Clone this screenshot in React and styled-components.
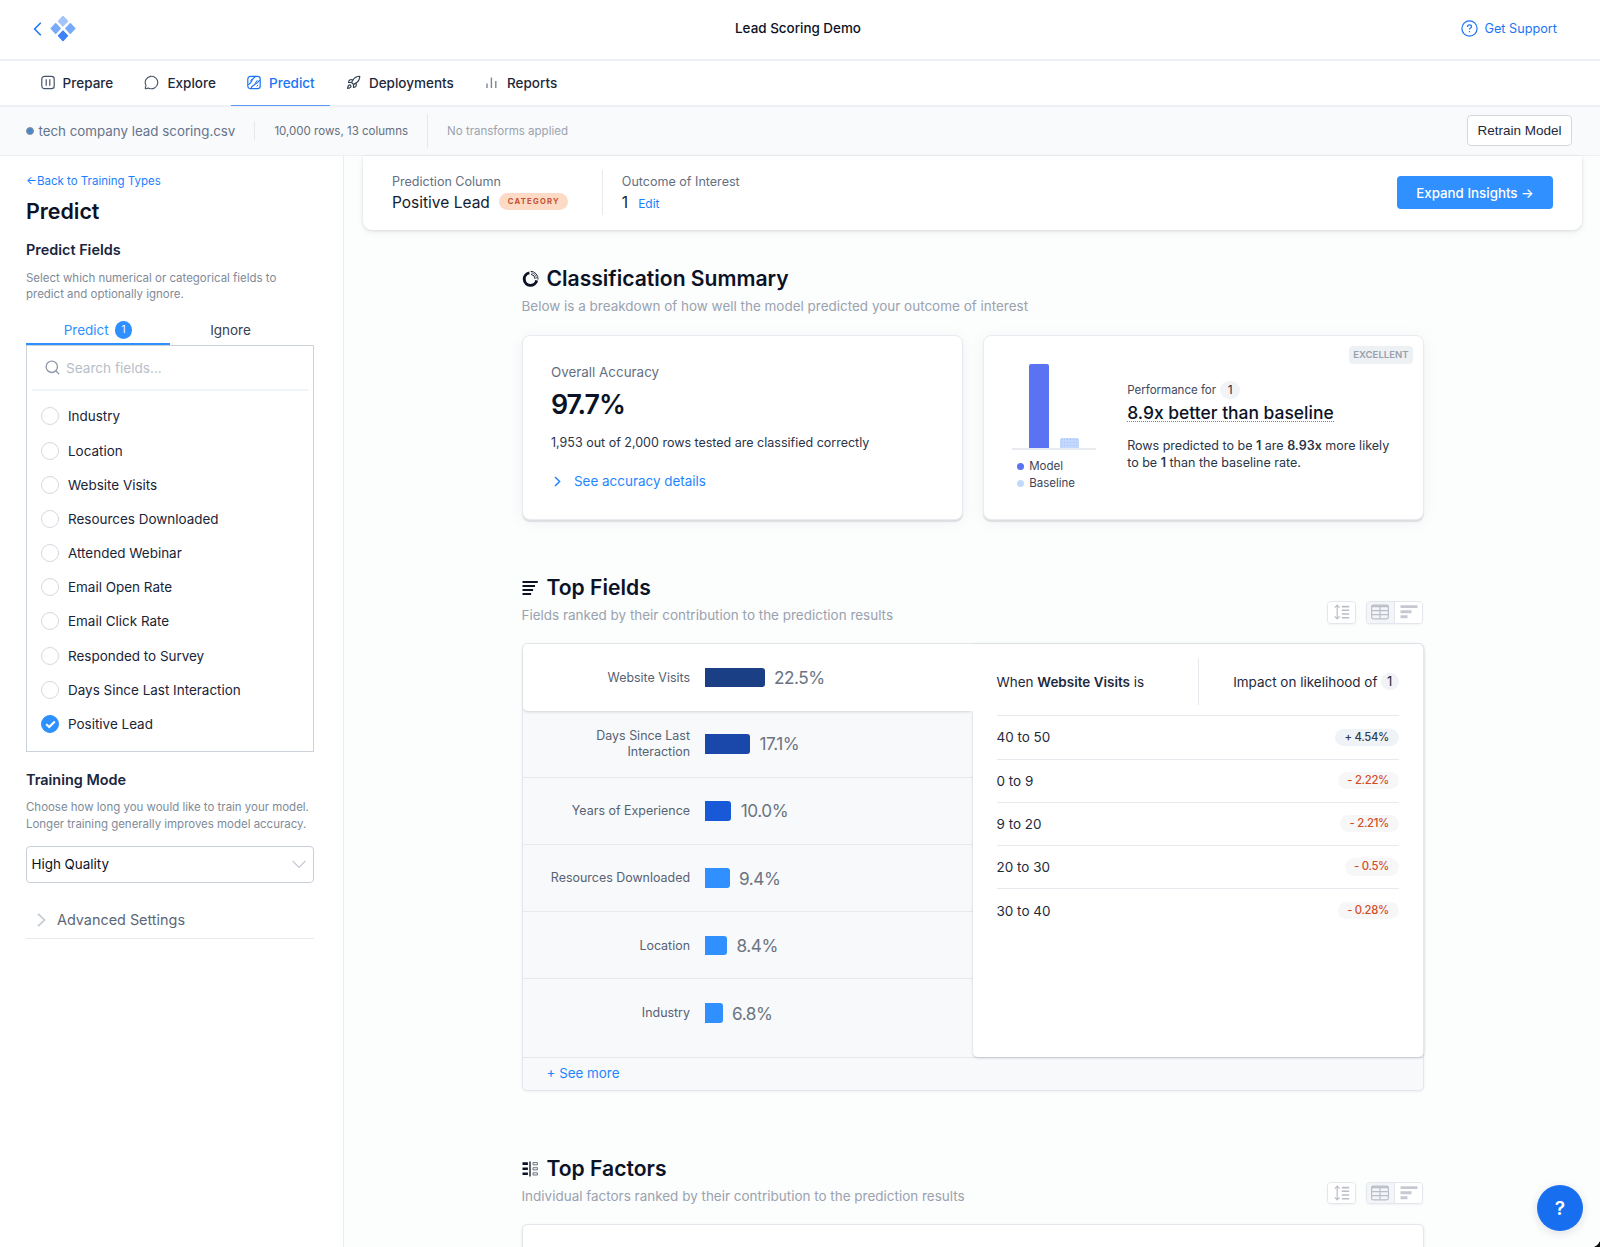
import React from "react";
import styled, { createGlobalStyle } from "styled-components";
import { MessageCircle, Rocket, Search } from "lucide-react";

const fieldNames = [
  "Industry",
  "Location",
  "Website Visits",
  "Resources Downloaded",
  "Attended Webinar",
  "Email Open Rate",
  "Email Click Rate",
  "Responded to Survey",
  "Days Since Last Interaction",
  "Positive Lead",
];

const topFields = [
  { name: "Website Visits", value: "22.5%", width: 60, color: "#1a3f85" },
  { name: "Days Since Last Interaction", value: "17.1%", width: 45.5, color: "#1a47aa" },
  { name: "Years of Experience", value: "10.0%", width: 26.7, color: "#1759d6" },
  { name: "Resources Downloaded", value: "9.4%", width: 25, color: "#3090ff" },
  { name: "Location", value: "8.4%", width: 22.5, color: "#3090ff" },
  { name: "Industry", value: "6.8%", width: 18, color: "#3090ff" },
];

const impacts = [
  { range: "40 to 50", value: "+ 4.54%", positive: true },
  { range: "0 to 9", value: "- 2.22%" },
  { range: "9 to 20", value: "- 2.21%" },
  { range: "20 to 30", value: "- 0.5%" },
  { range: "30 to 40", value: "- 0.28%" },
];

export default function App() {
  return (
    <Page>
      <GlobalStyle />
      <Header>
        <HeaderLeft>
          <BackIcon />
          <Logo />
        </HeaderLeft>
        <Title>Lead Scoring Demo</Title>
        <Support>
          <HelpIcon />
          Get Support
        </Support>
      </Header>
      <Nav>
        <Tab>
          <PrepareIcon />
          Prepare
        </Tab>
        <Tab>
          <MessageCircle size={15} strokeWidth={1.8} color="#475569" />
          Explore
        </Tab>
        <Tab $active>
          <PredictIcon />
          Predict
        </Tab>
        <Tab>
          <Rocket size={15} strokeWidth={1.9} color="#334155" />
          Deployments
        </Tab>
        <Tab>
          <ReportsIcon />
          Reports
        </Tab>
      </Nav>
      <DatasetBar>
        <Dot />
        <FileName>tech company lead scoring.csv</FileName>
        <Divider $height={19} />
        <FileInfo>10,000 rows, 13 columns</FileInfo>
        <Divider $height={34} />
        <FileInfo $muted>No transforms applied</FileInfo>
        <RetrainButton>Retrain Model</RetrainButton>
      </DatasetBar>
      <Body>
        <Sidebar />
        <Main>
          <TargetCard>
            <TargetColumn>
              <TargetLabel>Prediction Column</TargetLabel>
              <TargetValue>
                Positive Lead <CategoryBadge>CATEGORY</CategoryBadge>
              </TargetValue>
            </TargetColumn>
            <TargetColumn $last>
              <TargetLabel>Outcome of Interest</TargetLabel>
              <TargetValue>
                1 <EditLink>Edit</EditLink>
              </TargetValue>
            </TargetColumn>
            <ExpandButton>Expand Insights →</ExpandButton>
          </TargetCard>
          <Content>
            <SectionHeader
              top={35}
              icon={<SummaryIcon />}
              title="Classification Summary"
              text="Below is a breakdown of how well the model predicted your outcome of interest"
            />
            <SummaryCards />
            <SectionHeader
              top={54.3}
              icon={<FieldsIcon />}
              title="Top Fields"
              text="Fields ranked by their contribution to the prediction results"
              controls
            />
            <TopFields />
            <SectionHeader
              top={64}
              icon={<FactorsIcon />}
              title="Top Factors"
              text="Individual factors ranked by their contribution to the prediction results"
              controls
            />
            <FactorsCard />
          </Content>
        </Main>
      </Body>
      <HelpButton>?</HelpButton>
      <WindowCorner />
    </Page>
  );
}

function Sidebar() {
  return (
    <SidebarWrapper>
      <BackLink>←Back to Training Types</BackLink>
      <SidebarTitle>Predict</SidebarTitle>
      <GroupTitle $top={16}>Predict Fields</GroupTitle>
      <GroupText>
        Select which numerical or categorical fields to
        <br />
        predict and optionally ignore.
      </GroupText>
      <FieldTabs>
        <FieldTab $active>
          Predict <Count>1</Count>
        </FieldTab>
        <FieldTab>Ignore</FieldTab>
      </FieldTabs>
      <FieldBox>
        <SearchRow>
          <Search size={17} strokeWidth={1.9} color="#8f98a6" />
          Search fields...
        </SearchRow>
        <FieldList>
          {fieldNames.map((name) => (
            <FieldItem key={name}>
              <Radio $checked={name === "Positive Lead"}>
                {name === "Positive Lead" && <CheckIcon />}
              </Radio>
              {name}
            </FieldItem>
          ))}
        </FieldList>
      </FieldBox>
      <GroupTitle $top={17.5}>Training Mode</GroupTitle>
      <GroupText>
        Choose how long you would like to train your model.
        <br />
        Longer training generally improves model accuracy.
      </GroupText>
      <Select>
        High Quality
        <svg width="14" height="9" viewBox="0 0 14 9" fill="none">
          <path d="M0.7 1l6.3 6.4L13.3 1" stroke="#c3c9d2" strokeWidth="1.1" />
        </svg>
      </Select>
      <Advanced>
        <svg width="9" height="14" viewBox="0 0 9 14" fill="none">
          <path d="M1 0.8l6.6 6.2L1 13.2" stroke="#c3c9d2" strokeWidth="1.6" />
        </svg>
        Advanced Settings
      </Advanced>
    </SidebarWrapper>
  );
}

function SectionHeader(props) {
  return (
    <SectionHead $top={props.top}>
      <div>
        <SectionTitle>
          {props.icon}
          {props.title}
        </SectionTitle>
        <SectionText>{props.text}</SectionText>
      </div>
      {props.controls && (
        <Controls>
          <ControlGroup>
            <Control>
              <SortIcon />
            </Control>
          </ControlGroup>
          <ControlGroup>
            <Control $active>
              <TableIcon />
            </Control>
            <Control>
              <BarsIcon />
            </Control>
          </ControlGroup>
        </Controls>
      )}
    </SectionHead>
  );
}

function SummaryCards() {
  return (
    <Cards>
      <AccuracyCard>
        <AccuracyLabel>Overall Accuracy</AccuracyLabel>
        <AccuracyValue>97.7%</AccuracyValue>
        <AccuracyText>1,953 out of 2,000 rows tested are classified correctly</AccuracyText>
        <DetailsLink>
          <svg width="7" height="11" viewBox="0 0 7 11" fill="none">
            <path d="M1 1l4.6 4.5L1 10" stroke="#1d86ff" strokeWidth="1.5" />
          </svg>
          See accuracy details
        </DetailsLink>
      </AccuracyCard>
      <PerformanceCard>
        <Rating>EXCELLENT</Rating>
        <ChartColumn>
          <Chart>
            <ModelBar />
            <BaselineBar />
          </Chart>
          <Legend $color="#5b73f3">Model</Legend>
          <Legend $color="#c3d8fd">Baseline</Legend>
        </ChartColumn>
        <div>
          <PerformanceFor>
            Performance for <Pill>1</Pill>
          </PerformanceFor>
          <PerformanceTitle>8.9x better than baseline</PerformanceTitle>
          <PerformanceText>
            Rows predicted to be <b>1</b> are <b>8.93x</b> more likely
            <br />
            to be <b>1</b> than the baseline rate.
          </PerformanceText>
        </div>
      </PerformanceCard>
    </Cards>
  );
}

function TopFields() {
  return (
    <FieldsCard>
      <FieldsBody>
        <FieldRows>
          {topFields.map((field, i) => (
            <FieldRow key={field.name} $active={i === 0} $last={i === topFields.length - 1}>
              <FieldLabel>{field.name}</FieldLabel>
              <FieldBar style={{ width: field.width, background: field.color }} />
              <FieldValue>{field.value}</FieldValue>
            </FieldRow>
          ))}
        </FieldRows>
        <ImpactPanel>
          <ImpactHead>
            <ImpactCell>
              <span>
                When <b>Website Visits</b> is
              </span>
            </ImpactCell>
            <ImpactCell $right>
              Impact on likelihood of <Pill $small>1</Pill>
            </ImpactCell>
          </ImpactHead>
          {impacts.map((impact) => (
            <ImpactRow key={impact.range}>
              {impact.range}
              <ImpactValue $positive={impact.positive}>{impact.value}</ImpactValue>
            </ImpactRow>
          ))}
        </ImpactPanel>
      </FieldsBody>
      <SeeMore>+ See more</SeeMore>
    </FieldsCard>
  );
}

//icons

function BackIcon() {
  return (
    <svg width="9" height="14" viewBox="0 0 9 14" fill="none">
      <path d="M7.8 0.8L1.6 7l6.2 6.2" stroke="#1b74f5" strokeWidth="1.5" />
    </svg>
  );
}

function Logo() {
  return (
    <svg width="26" height="27" viewBox="0 0 26 27" strokeWidth="1.6" strokeLinejoin="round">
      <path d="M13 1.6l4.4 4.6-4.4 4.6-4.4-4.6z" fill="#a3c3fb" stroke="#a3c3fb" />
      <path d="M5.7 8.9l4.4 4.6-4.4 4.6-4.4-4.6z" fill="#78a9fa" stroke="#78a9fa" />
      <path d="M20.3 8.9l4.4 4.6-4.4 4.6-4.4-4.6z" fill="#78a9fa" stroke="#78a9fa" />
      <path d="M13 16.2l4.4 4.6-4.4 4.6-4.4-4.6z" fill="#3f80f7" stroke="#3f80f7" />
    </svg>
  );
}

function HelpIcon() {
  return (
    <svg width="17" height="17" viewBox="0 0 17 17" fill="none" stroke="#1b74f5" strokeWidth="1.2">
      <circle cx="8.5" cy="8.5" r="7.6" />
      <path d="M6.5 6.9c0-1.2.9-2 2-2s2 .8 2 1.8c0 1.3-2 1.4-2 2.8" />
      <path d="M8.5 11v1.3" />
    </svg>
  );
}

function PrepareIcon() {
  return (
    <svg width="14" height="15" viewBox="0 0 14 15" fill="none" stroke="#475569" strokeWidth="1.2">
      <rect x="0.8" y="1.3" width="12.4" height="12.4" rx="2.6" />
      <path d="M5.2 4.3v6.4M8.8 4.3v6.4" />
    </svg>
  );
}

function PredictIcon() {
  return (
    <svg width="14" height="15" viewBox="0 0 14 15" fill="none" stroke="#1b74f5" strokeWidth="1.2">
      <rect x="0.8" y="1.3" width="12.4" height="12.4" rx="2.6" />
      <path d="M1.2 9.6c3.6-.4 2-5 7.4-8" />
      <path d="M4 13.4c1-4.4 5-2.6 8.8-8.4" />
      <path d="M8 8.4l2.4-3.2M3.6 6l1.6-2.2M9.6 11.4l1.6-1.4" strokeWidth="1" />
    </svg>
  );
}

function ReportsIcon() {
  return (
    <svg width="14" height="15" viewBox="0 0 14 15" fill="none" stroke="#7b8798" strokeWidth="1.4">
      <path d="M2 8.6V13M6.4 2.4V13M10.8 6V13" />
    </svg>
  );
}

function CheckIcon() {
  return (
    <svg width="11" height="9" viewBox="0 0 11 9" fill="none">
      <path d="M1.2 4.2l3 2.9 5.6-5.6" stroke="#fff" strokeWidth="2.1" />
    </svg>
  );
}

function SummaryIcon() {
  return (
    <svg width="17" height="18" viewBox="0 0 17 18" fill="none" stroke="#0b1226">
      <path d="M7.4 2.9a6.3 6.3 0 1 0 7.3 7.5" strokeWidth="2.9" />
      <path d="M8.6 1.3a7.6 7.6 0 0 1 7.4 8.3" strokeWidth="0.9" />
      <path d="M9.2 2.9a6 6 0 0 1 5.2 5.7" strokeWidth="0.6" />
      <path d="M9 4.4a4.8 4.8 0 0 1 4.1 4.6" strokeWidth="0.9" />
    </svg>
  );
}

function FieldsIcon() {
  return (
    <svg width="17" height="16" viewBox="0 0 17 16" fill="none" stroke="#0b1226" strokeWidth="1.9">
      <path d="M0.5 2h15.3M0.5 6h12.5M0.5 10h10.6M0.5 14h8.6" />
    </svg>
  );
}

function FactorsIcon() {
  return (
    <svg width="17" height="16" viewBox="0 0 17 16" fill="none" stroke="#0b1226">
      <path d="M0.5 2.6h5.4M0.5 7.7h5.4M0.5 12.8h5.4" strokeWidth="2.6" />
      <path d="M8 0.4v15" strokeWidth="1.3" />
      <path d="M11 1.6h4.4v2.2H11zM11 6.7h4.4v2.2H11zM11 11.8h4.4V14H11z" strokeWidth="0.8" stroke="#4b5465" />
    </svg>
  );
}

function SortIcon() {
  return (
    <svg width="16" height="16" viewBox="0 0 16 16" fill="none" stroke="#b9bec8">
      <path d="M3.2 1.4v13.2M0.8 3.7l2.4-2.5 2.4 2.5M0.8 12.3l2.4 2.5 2.4-2.5" strokeWidth="1.2" />
      <path d="M7.8 2.6h7.4M7.8 6.3h7.4M7.8 10h7.4M7.8 13.7h7.4" strokeWidth="1.6" />
    </svg>
  );
}

function TableIcon() {
  return (
    <svg width="18" height="16" viewBox="0 0 18 16" fill="none" stroke="#b9bec8" strokeWidth="1.2">
      <rect x="0.6" y="1" width="16.8" height="13.8" rx="1.8" />
      <path d="M0.8 2.2h16.4" strokeWidth="2" />
      <path d="M0.8 6.6h16.4M0.8 10.7h16.4M9 3v11.6" />
    </svg>
  );
}

function BarsIcon() {
  return (
    <svg width="18" height="16" viewBox="0 0 18 16" fill="none" stroke="#c5c9d1" strokeWidth="2.9">
      <path d="M0.5 2.6h17M0.5 7.7h11M0.5 12.8h7" />
    </svg>
  );
}

//styles

const GlobalStyle = createGlobalStyle`
  * {
    box-sizing: border-box;
  }
  body {
    margin: 0;
    font-family: Inter, "Liberation Sans", sans-serif;
    color: #1e293b;
    background: #ffffff;
  }
  svg {
    flex-shrink: 0;
  }
`;

const Page = styled.div`
  position: relative;
  display: flex;
  flex-direction: column;
  width: 1600px;
  height: 1247px;
  overflow: hidden;
`;
const Header = styled.header`
  display: grid;
  grid-template-columns: 1fr auto 1fr;
  align-items: center;
  height: 61px;
  padding: 0 43px 2px 33px;
  border-bottom: 2px solid #edf1f5;
`;
const HeaderLeft = styled.div`
  display: flex;
  align-items: center;
  gap: 8px;
`;
const Title = styled.div`
  margin: 0 0 1.5px 6px;
  font-size: 13.43px;
  font-weight: 500;
  color: #0b1226;
`;
const Support = styled.div`
  display: flex;
  align-items: center;
  justify-content: flex-end;
  gap: 7px;
  font-size: 12.69px;
  color: #1b74f5;
`;
const Nav = styled.nav`
  display: flex;
  height: 46px;
  padding-left: 25px;
  border-bottom: 2px solid #edf1f5;
`;
const Tab = styled.div`
  display: flex;
  align-items: center;
  gap: 8px;
  height: 45px;
  padding: 0 15.6px 1px;
  border-bottom: 1px solid ${(p) => (p.$active ? "#5c9af5" : "transparent")};
  font-size: 13.5px;
  font-weight: 500;
  color: ${(p) => (p.$active ? "#1b74f5" : "#1e293b")};
`;
const DatasetBar = styled.div`
  display: flex;
  align-items: center;
  height: 49px;
  padding: 0 28px 1px 26px;
  background: #f9fafc;
  border-bottom: 1px solid #edf0f3;
`;
const Dot = styled.div`
  width: 8px;
  height: 8px;
  border: 1px solid #8291a3;
  border-radius: 50%;
  background: #4c86c6;
`;
const FileName = styled.div`
  margin-left: 4.5px;
  font-size: 13.34px;
  color: #64748b;
`;
const Divider = styled.div`
  width: 1px;
  height: ${(p) => p.$height}px;
  margin: 0 19px;
  background: #e5e8ec;
`;
const FileInfo = styled.div`
  font-size: 11.52px;
  color: ${(p) => (p.$muted ? "#9ca3af" : "#64707f")};
`;
const RetrainButton = styled.button`
  width: 105px;
  height: 31px;
  margin-left: auto;
  padding: 0;
  border: 1px solid #d5d9df;
  border-radius: 4px;
  background: #ffffff;
  font-family: "Liberation Sans", Arial, sans-serif;
  font-size: 13.5px;
  color: #1e293b;
`;
const Body = styled.div`
  display: flex;
  flex: 1;
  min-height: 0;
`;
const SidebarWrapper = styled.aside`
  width: 344px;
  padding: 16.6px 29px 0 26px;
  border-right: 1px solid #e9edf0;
`;
const BackLink = styled.div`
  font-size: 11.5px;
  line-height: 16px;
  color: #1b80ff;
`;
const SidebarTitle = styled.div`
  margin-top: 9.7px;
  font-size: 21.4px;
  font-weight: 600;
  line-height: 26px;
  color: #0b1226;
`;
const GroupTitle = styled.div`
  margin-top: ${(p) => p.$top}px;
  font-size: 14.43px;
  font-weight: 600;
  line-height: 20px;
  color: #1a2540;
`;
const GroupText = styled.div`
  margin-top: 9.9px;
  font-size: 11.46px;
  line-height: 16.3px;
  color: #808b99;
  white-space: nowrap;
`;
const FieldTabs = styled.div`
  display: flex;
  margin-top: 14.3px;
`;
const FieldTab = styled.div`
  display: flex;
  align-items: center;
  justify-content: center;
  gap: 6px;
  width: 50%;
  height: 28px;
  padding-right: ${(p) => (p.$active ? 0 : 23)}px;
  border-bottom: 2px solid ${(p) => (p.$active ? "#2e90ff" : "transparent")};
  font-size: 13.5px;
  color: ${(p) => (p.$active ? "#2e90ff" : "#374151")};
`;
const Count = styled.span`
  width: 17.5px;
  border-radius: 50%;
  background: #2e90ff;
  font-size: 10px;
  line-height: 17.5px;
  text-align: center;
  color: #ffffff;
`;
const FieldBox = styled.div`
  width: 288px;
  height: 407px;
  padding: 0 5px;
  border: 1px solid #cbd2da;
`;
const SearchRow = styled.div`
  display: flex;
  align-items: center;
  gap: 5px;
  height: 45px;
  padding-left: 12px;
  border-bottom: 2px solid #eff4f8;
  font-size: 13.6px;
  color: #b8bec8;
`;
const FieldList = styled.div`
  padding: 8.2px 0 0 9px;
`;
const FieldItem = styled.div`
  display: flex;
  align-items: center;
  gap: 9px;
  height: 34.2px;
  font-size: 13.46px;
  color: #1a2438;
`;
const Radio = styled.div`
  display: flex;
  align-items: center;
  justify-content: center;
  width: 18px;
  height: 18px;
  border: 1px solid ${(p) => (p.$checked ? "#2e90ff" : "#d5d9e0")};
  border-radius: 50%;
  background: ${(p) => (p.$checked ? "#2e90ff" : "#ffffff")};
`;
const Select = styled.div`
  display: flex;
  align-items: center;
  justify-content: space-between;
  width: 288px;
  height: 36.4px;
  margin-top: 14.2px;
  padding: 0 7.5px 0 4.5px;
  border: 1px solid #c9cfd9;
  border-radius: 4px;
  font-size: 13.4px;
  color: #0b1226;
`;
const Advanced = styled.div`
  display: flex;
  align-items: center;
  gap: 11px;
  width: 288px;
  height: 36.5px;
  margin-top: 20px;
  padding: 0 0 1px 11px;
  border-bottom: 1px solid #e5e8ec;
  font-size: 14.4px;
  color: #5b6778;
`;
const Main = styled.main`
  flex: 1;
  background: #fcfdfd;
`;
const TargetCard = styled.div`
  display: flex;
  height: 74px;
  margin: 0 18px 0 19px;
  padding: 0 29px 0 29px;
  border-radius: 0 0 9px 9px;
  background: #ffffff;
  box-shadow: 0 1px 3px rgba(30, 41, 59, 0.12), 0 3px 8px rgba(30, 41, 59, 0.05);
`;
const TargetColumn = styled.div`
  height: 45px;
  margin: 14px 19px 0 0;
  padding-right: ${(p) => (p.$last ? 0 : 33.5)}px;
  border-right: ${(p) => (p.$last ? "none" : "1.5px solid #e6e9ed")};
`;
const TargetLabel = styled.div`
  padding-top: 4px;
  font-size: 12.56px;
  line-height: 16px;
  color: #64707f;
`;
const TargetValue = styled.div`
  display: flex;
  align-items: center;
  height: 20px;
  margin-top: 2.2px;
  font-size: 15.5px;
  color: #131c30;
`;
const CategoryBadge = styled.span`
  width: 69px;
  height: 17px;
  margin: -2px 0 0 9.5px;
  border-radius: 9px;
  background: #fcdac6;
  font-size: 7.6px;
  font-weight: 700;
  letter-spacing: 1.25px;
  line-height: 17.5px;
  text-align: center;
  color: #c4512f;
`;
const EditLink = styled.span`
  margin: 2px 0 0 10px;
  font-size: 12px;
  color: #1b80ff;
`;
const ExpandButton = styled.button`
  width: 156px;
  height: 33px;
  margin: 20px 0 0 auto;
  padding: 0;
  border: none;
  border-radius: 4px;
  background: #3090ff;
  font-family: inherit;
  font-size: 13.35px;
  font-weight: 500;
  color: #ffffff;
`;
const Content = styled.div`
  width: 902px;
  margin: 0 0 0 177.5px;
`;
const SectionHead = styled.div`
  display: flex;
  align-items: flex-end;
  justify-content: space-between;
  margin-top: ${(p) => p.$top}px;
`;
const SectionTitle = styled.div`
  display: flex;
  align-items: center;
  gap: 8px;
  font-size: 21.1px;
  font-weight: 600;
  line-height: 28px;
  color: #0b1226;
`;
const SectionText = styled.div`
  margin-top: 3px;
  font-size: 13.47px;
  line-height: 20px;
  color: #9aa2af;
`;
const Controls = styled.div`
  display: flex;
  gap: 9.5px;
  padding: 0 0.5px 1.8px 0;
`;
const ControlGroup = styled.div`
  display: flex;
  height: 22.5px;
  border: 1px solid #e3e6eb;
  border-radius: 4px;
  overflow: hidden;
  background: #ffffff;
  box-shadow: 0 1px 2px rgba(30, 41, 59, 0.05);
`;
const Control = styled.div`
  display: flex;
  align-items: center;
  justify-content: center;
  width: ${(p) => (p.$active ? 28.5 : 27)}px;
  border-right: ${(p) => (p.$active ? "1px solid #e3e6eb" : "none")};
  background: ${(p) => (p.$active ? "#f4f5f8" : "#ffffff")};
`;
const Cards = styled.div`
  display: grid;
  grid-template-columns: 1fr 1fr;
  gap: 20px;
  margin-top: 18.5px;
`;
const Card = styled.div`
  position: relative;
  height: 185.5px;
  border: 1px solid #e8ebef;
  border-radius: 8px;
  background: #ffffff;
  box-shadow: 0 2px 1px rgba(30, 41, 59, 0.12), 0 2px 16px rgba(30, 41, 59, 0.05);
`;
const AccuracyCard = styled(Card)`
  padding: 27.4px 28.5px 0;
`;
const AccuracyLabel = styled.div`
  font-size: 13.4px;
  line-height: 18px;
  color: #64707f;
`;
const AccuracyValue = styled.div`
  margin-top: 7.2px;
  font-size: 26.8px;
  font-weight: 600;
  letter-spacing: -1.05px;
  line-height: 32px;
  color: #0b1226;
`;
const AccuracyText = styled.div`
  margin-top: 13.7px;
  font-size: 12.5px;
  line-height: 18px;
  color: #2a3547;
`;
const DetailsLink = styled.div`
  display: flex;
  align-items: center;
  gap: 13.5px;
  margin-top: 19.7px;
  padding-left: 2.5px;
  font-size: 13.45px;
  line-height: 20px;
  color: #1d86ff;
`;
const PerformanceCard = styled(Card)`
  display: flex;
  gap: 31px;
  padding-left: 28.7px;

  & > div:last-child {
    padding-top: 45.3px;
  }
`;
const Rating = styled.span`
  position: absolute;
  top: 10px;
  right: 9.5px;
  width: 64px;
  border-radius: 4px;
  background: #eef1f4;
  font-size: 9.6px;
  font-weight: 600;
  line-height: 18.5px;
  text-align: center;
  color: #98a1ad;
`;
const ChartColumn = styled.div`
  width: 84px;
  padding-top: 28.5px;
`;
const Chart = styled.div`
  display: flex;
  align-items: flex-end;
  gap: 11.5px;
  height: 86px;
  margin-bottom: 8.4px;
  padding-left: 17px;
  border-bottom: 2px solid #e8ebef;
`;
const ModelBar = styled.div`
  width: 19.5px;
  height: 84px;
  border-radius: 2px 2px 0 0;
  background: #5b73f3;
`;
const BaselineBar = styled.div`
  width: 19px;
  height: 10.5px;
  border-radius: 2px 2px 0 0;
  background-color: #c3d8fd;
  background-image: radial-gradient(#a3c2f5 0.7px, transparent 0.8px);
  background-size: 3px 3px;
`;
const Legend = styled.div`
  display: flex;
  align-items: center;
  gap: 5.5px;
  padding-left: 4.5px;
  font-size: 11.5px;
  line-height: 16.8px;
  color: #3b4658;

  &::before {
    content: "";
    width: 7px;
    height: 7px;
    border-radius: 50%;
    background: ${(p) => p.$color};
  }
`;
const PerformanceFor = styled.div`
  display: flex;
  align-items: center;
  gap: 4px;
  height: 18px;
  font-size: 11.52px;
  color: #3f4a5c;
`;
const Pill = styled.span`
  min-width: ${(p) => (p.$small ? 17.5 : 20)}px;
  border-radius: 9px;
  background: #f1f3f6;
  font-size: ${(p) => (p.$small ? 13 : 12)}px;
  line-height: ${(p) => (p.$small ? 17 : 18)}px;
  text-align: center;
  color: #1e293b;
`;
const PerformanceTitle = styled.div`
  width: max-content;
  margin-top: 5.4px;
  border-bottom: 1.5px dotted #7b8494;
  font-size: 17.45px;
  font-weight: 500;
  line-height: 17px;
  color: #0b1226;
`;
const PerformanceText = styled.div`
  margin-top: 14.6px;
  font-size: 12.53px;
  line-height: 17.2px;
  white-space: nowrap;
  color: #2a3547;

  b {
    font-weight: 600;
  }
`;
const FieldsCard = styled.div`
  height: 448px;
  margin-top: 17.6px;
  border: 1px solid #e3e7eb;
  border-radius: 5px;
  background: #f8f9fa;
  box-shadow: 0 1px 3px rgba(30, 41, 59, 0.06);
`;
const FieldsBody = styled.div`
  display: flex;
  height: 413px;
`;
const FieldRows = styled.div`
  width: 450px;
`;
const FieldRow = styled.div`
  position: relative;
  z-index: ${(p) => (p.$active ? 2 : 0)};
  display: flex;
  align-items: center;
  height: ${(p) => (p.$active ? 66.8 : p.$last ? 77.4 : 67.2)}px;
  padding: 0 0 ${(p) => (p.$last ? 10 : 0)}px 22.5px;
  border-bottom: ${(p) => (p.$active || p.$last ? "none" : "1px solid #e6e9ed")};
  border-radius: ${(p) => (p.$active ? "5px 0 0 5px" : 0)};
  background: ${(p) => (p.$active ? "#ffffff" : "none")};
  box-shadow: ${(p) => (p.$active ? "-1px 3px 3px -2px rgba(30, 41, 59, 0.18)" : "none")};
`;
const FieldLabel = styled.div`
  width: 145px;
  margin-right: 14.5px;
  padding-top: 0.6px;
  font-size: 12.45px;
  line-height: 16px;
  text-align: right;
  color: #566174;
`;
const FieldBar = styled.div`
  height: 19.5px;
  border-radius: 0 3px 3px 0;
`;
const FieldValue = styled.div`
  margin-left: 9.5px;
  font-size: 17.2px;
  letter-spacing: -0.45px;
  color: #6b7482;
`;
const ImpactPanel = styled.div`
  position: relative;
  z-index: 1;
  flex: 1;
  margin-right: -1px;
  padding: 0 24px;
  border-right: 1px solid #e3e7eb;
  border-radius: 0 5px 5px 5px;
  background: #ffffff;
  box-shadow: 0 1px 3px rgba(30, 41, 59, 0.2);
  font-size: 13.47px;
  color: #1e293b;
`;
const ImpactHead = styled.div`
  display: flex;
  align-items: center;
  height: 72.6px;
  padding-top: 4px;
  border-bottom: 1px solid #e6eaee;
`;
const ImpactCell = styled.div`
  display: flex;
  align-items: center;
  justify-content: ${(p) => (p.$right ? "flex-end" : "flex-start")};
  gap: 3.6px;
  width: 50%;
  height: 47.5px;
  border-left: ${(p) => (p.$right ? "1px solid #e6eaee" : "none")};

  b {
    font-weight: 600;
  }
`;
const ImpactRow = styled.div`
  display: flex;
  align-items: center;
  justify-content: space-between;
  height: 43.2px;
  padding-bottom: 0.5px;
  border-bottom: 1px solid #e6eaee;

  &:last-child {
    border-bottom: none;
  }
`;
const ImpactValue = styled.span`
  padding: 0 9.5px;
  border-radius: 9px;
  background: ${(p) => (p.$positive ? "#eff3f7" : "#f7f7f8")};
  font-size: 11.3px;
  font-weight: 500;
  letter-spacing: -0.3px;
  line-height: 17.5px;
  color: ${(p) => (p.$positive ? "#2f3b4f" : "#d34c28")};
`;
const SeeMore = styled.div`
  height: 33px;
  padding-left: 24px;
  border-top: 1px solid #e3e7eb;
  font-size: 13.4px;
  line-height: 31.4px;
  color: #1d86ff;
`;
const FactorsCard = styled.div`
  height: 60px;
  margin-top: 18px;
  border: 1px solid #e3e7eb;
  border-radius: 5px;
  background: #ffffff;
  box-shadow: 0 1px 3px rgba(30, 41, 59, 0.1);
`;
const HelpButton = styled.button`
  position: absolute;
  right: 17px;
  bottom: 16px;
  width: 46px;
  height: 46px;
  padding: 0;
  border: none;
  border-radius: 50%;
  background: #176ff0;
  box-shadow: 0 2px 8px rgba(30, 41, 59, 0.14);
  font-family: inherit;
  font-size: 19px;
  font-weight: 600;
  color: #ffffff;
`;
const WindowCorner = styled.div`
  position: absolute;
  right: 0;
  bottom: 0;
  width: 10px;
  height: 10px;
  background: radial-gradient(circle at 0 0, transparent 10.4px, #0b0d12 11px);
`;
